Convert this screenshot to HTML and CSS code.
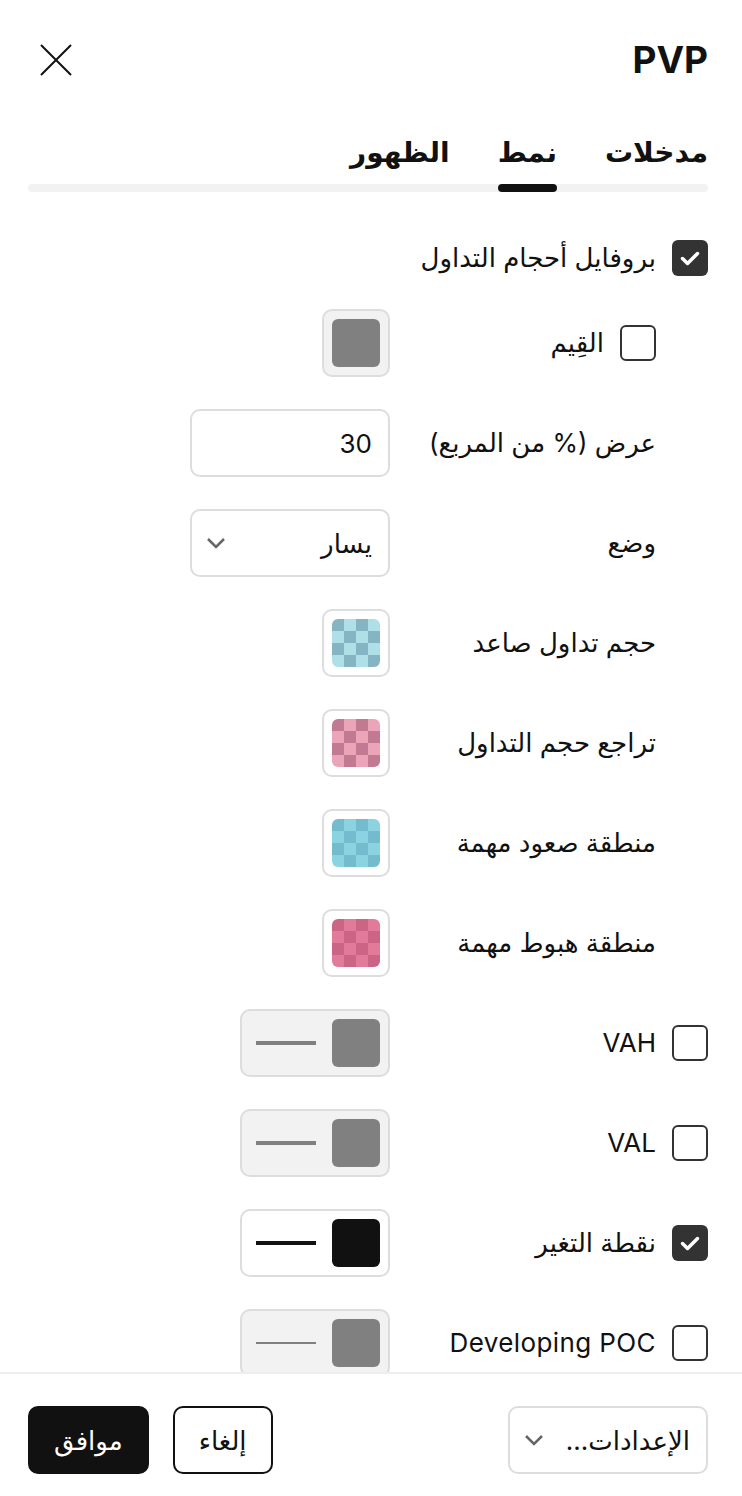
FILE: index.html
```html
<!DOCTYPE html>
<html lang="ar" dir="rtl">

<head>
    <meta charset="UTF-8">
    <meta name="viewport" content="width=device-width, initial-scale=1.0">
    <title>PVP</title>
    <link rel="stylesheet" href="styles.css">
</head>

<body>
    <div class="dialog">
        <div class="header">
            <div class="title" dir="ltr">PVP</div>
            <button class="close" aria-label="close">
                <svg width="32" height="32" viewBox="0 0 32 32"><path d="M1 1L31 31M31 1L1 31" stroke="#111" stroke-width="2" fill="none"/></svg>
            </button>
        </div>

        <div class="tabs">
            <div class="tab">مدخلات</div>
            <div class="tab active">نمط</div>
            <div class="tab">الظهور</div>
        </div>
        <div class="tab-track"></div>

        <div class="content">
            <div class="row row-top">
                <label class="label">
                    <span class="check on"><svg width="36" height="36" viewBox="0 0 36 36"><path d="M10.5 18.5l5 5 10-10" stroke="#fff" stroke-width="3.5" fill="none" stroke-linecap="round" stroke-linejoin="round"/></svg></span>
                    بروفايل أحجام التداول
                </label>
            </div>

            <div class="row">
                <label class="label indent">
                    <span class="check"></span>
                    القِيم
                </label>
                <div class="swatch disabled"><span class="chip gray"></span></div>
            </div>

            <div class="row">
                <div class="label indent">عرض (% من المربع)</div>
                <div class="field">30</div>
            </div>

            <div class="row">
                <div class="label indent">وضع</div>
                <div class="field select">
                    <span>يسار</span>
                    <svg class="chevron" width="20" height="12" viewBox="0 0 20 12"><path d="M2 2l8 8 8-8" stroke="#666" stroke-width="2.5" fill="none"/></svg>
                </div>
            </div>

            <div class="row">
                <div class="label indent">حجم تداول صاعد</div>
                <div class="swatch"><span class="chip checker up"></span></div>
            </div>

            <div class="row">
                <div class="label indent">تراجع حجم التداول</div>
                <div class="swatch"><span class="chip checker down"></span></div>
            </div>

            <div class="row">
                <div class="label indent">منطقة صعود مهمة</div>
                <div class="swatch"><span class="chip checker up-area"></span></div>
            </div>

            <div class="row">
                <div class="label indent">منطقة هبوط مهمة</div>
                <div class="swatch"><span class="chip checker down-area"></span></div>
            </div>

            <div class="row">
                <label class="label">
                    <span class="check"></span>
                    VAH
                </label>
                <div class="line-box disabled"><span class="chip gray"></span><span class="line"></span></div>
            </div>

            <div class="row">
                <label class="label">
                    <span class="check"></span>
                    VAL
                </label>
                <div class="line-box disabled"><span class="chip gray"></span><span class="line"></span></div>
            </div>

            <div class="row">
                <label class="label">
                    <span class="check on"><svg width="36" height="36" viewBox="0 0 36 36"><path d="M10.5 18.5l5 5 10-10" stroke="#fff" stroke-width="3.5" fill="none" stroke-linecap="round" stroke-linejoin="round"/></svg></span>
                    نقطة التغير
                </label>
                <div class="line-box"><span class="chip black"></span><span class="line black"></span></div>
            </div>

            <div class="row">
                <label class="label">
                    <span class="check"></span>
                    <span class="latin">Developing POC</span>
                </label>
                <div class="line-box disabled"><span class="chip gray"></span><span class="line thin"></span></div>
            </div>
        </div>

        <div class="footer">
            <div class="field select footer-select">
                <span>الإعدادات...</span>
                <svg class="chevron" width="20" height="12" viewBox="0 0 20 12"><path d="M2 2l8 8 8-8" stroke="#666" stroke-width="2.5" fill="none"/></svg>
            </div>
            <div class="buttons">
                <button class="btn">إلغاء</button>
                <button class="btn primary">موافق</button>
            </div>
        </div>
    </div>
</body>

</html>
```

FILE: styles.css
```css
html,
body {
    margin: 0;
    padding: 0;
}

body {
    font-family: Inter, "DejaVu Sans", sans-serif;
    color: #111;
    background-color: #fff;
}

.dialog {
    height: 1496px;
    display: flex;
    flex-direction: column;
    overflow: hidden;
}

.header {
    display: flex;
    justify-content: space-between;
    align-items: center;
    height: 32px;
    margin-top: 44px;
    padding: 0 34px 0 40px;
}

.title {
    font-size: 37px;
    font-weight: 700;
    line-height: 32px;
}

.close {
    border: none;
    background: none;
    padding: 0;
    width: 32px;
    height: 32px;
    cursor: pointer;
}

.close svg {
    display: block;
}

.tabs {
    display: flex;
    gap: 48px;
    margin-top: 58px;
    padding: 0 34px 0 28px;
}

.tab {
    font-size: 28px;
    font-weight: 700;
    line-height: 36px;
    padding-bottom: 14px;
}

.tab.active::after {
    content: "";
    display: block;
    height: 8px;
    margin-top: 14px;
    margin-bottom: -22px;
    border-radius: 4px;
    background-color: #111;
    position: relative;
    z-index: 1;
}

.tab-track {
    height: 8px;
    margin: 0 34px 0 28px;
    border-radius: 4px;
    background-color: #f2f2f2;
}

.content {
    flex: 1;
    overflow: hidden;
    padding: 48px 34px 0 28px;
    display: flex;
    flex-direction: column;
    gap: 32px;
}

.row {
    display: grid;
    grid-template-columns: 318px 1fr;
    align-items: center;
    height: 68px;
    flex-shrink: 0;
}

.row.row-top {
    display: flex;
    height: 36px;
    margin-bottom: 1px;
}

.label {
    display: flex;
    align-items: center;
    gap: 16px;
    font-size: 26px;
    line-height: 34px;
    white-space: nowrap;
}

.label.indent {
    padding-right: 52px;
}

.latin {
    letter-spacing: 0.4px;
}

.check {
    width: 36px;
    height: 36px;
    box-sizing: border-box;
    border: 2px solid #333;
    border-radius: 6px;
    flex-shrink: 0;
}

.check.on {
    border: none;
    background-color: #333;
}

.check svg {
    display: block;
}

.swatch,
.line-box,
.field {
    justify-self: start;
    box-sizing: border-box;
    height: 68px;
    border: 2px solid #ddd;
    border-radius: 10px;
    background-color: #fff;
}

.swatch {
    width: 68px;
    display: flex;
    align-items: center;
    justify-content: center;
}

.line-box {
    width: 150px;
    display: flex;
    align-items: center;
    gap: 16px;
    padding: 0 8px;
}

.disabled {
    background-color: #f2f2f2;
}

.chip {
    width: 48px;
    height: 48px;
    border-radius: 6px;
    flex-shrink: 0;
}

.chip.gray {
    background-color: #808080;
}

.chip.black {
    background-color: #111;
}

.checker {
    background-size: 24px 24px;
}

.checker.up {
    background-image: repeating-conic-gradient(#afe0e8 0 25%, #85b4c2 0 50%);
}

.checker.down {
    background-image: repeating-conic-gradient(#eba5b9 0 25%, #c27a93 0 50%);
}

.checker.up-area {
    background-image: repeating-conic-gradient(#8bd3e1 0 25%, #74bccd 0 50%);
}

.checker.down-area {
    background-image: repeating-conic-gradient(#e27b9a 0 25%, #cc6585 0 50%);
}

.line {
    width: 60px;
    height: 4px;
    background-color: #808080;
}

.line.black {
    background-color: #111;
}

.line.thin {
    height: 2px;
}

.field {
    width: 200px;
    display: flex;
    align-items: center;
    padding: 0 16px 0 14px;
    font-size: 26px;
}

.select {
    justify-content: space-between;
}

.chevron {
    display: block;
}

.footer {
    border-top: 2px solid #eee;
    padding: 32px 34px 22px 28px;
    display: flex;
    justify-content: space-between;
    align-items: center;
    background-color: #fff;
}

.buttons {
    display: flex;
    gap: 24px;
}

.btn {
    height: 68px;
    padding: 0 24px;
    font-family: inherit;
    font-size: 26px;
    color: #111;
    background-color: #fff;
    border: 2px solid #111;
    border-radius: 10px;
    cursor: pointer;
}

.btn.primary {
    background-color: #111;
    color: #fff;
}
```
